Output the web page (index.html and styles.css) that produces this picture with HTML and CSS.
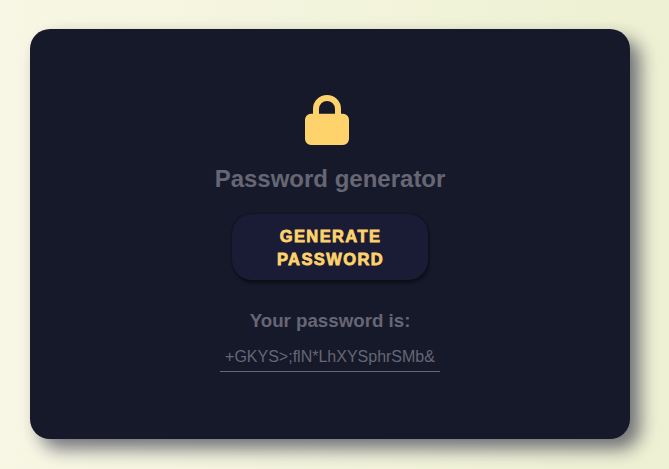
FILE: index.html
```html
<!DOCTYPE html>
<html lang="en">
<head>
<meta charset="utf-8">
<title>Password generator</title>
<link rel="stylesheet" href="styles.css">
</head>
<body>
<main class="card">
  <svg class="lock" viewBox="0 0 50 50" aria-hidden="true">
    <path fill-rule="evenodd" d="M8 18.8V14a14 14 0 0 1 28 0v4.800h2a6 6 0 0 1 6 6V44a6 6 0 0 1-6 6H6a6 6 0 0 1-6-6V24.800a6 6 0 0 1 6-6zM14 18.800h16v-4.800a8 8 0 0 0-16 0z"/>
  </svg>
  <h1 class="title">Password generator</h1>
  <button class="generate" type="button">Generate password</button>
  <h2 class="label">Your password is:</h2>
  <output class="password">+GKYS&gt;;flN*LhXYSphrSMb&amp;</output>
</main>
</body>
</html>
```
FILE: styles.css
```css
* { box-sizing: border-box; }
body {
  margin: 0;
  height: 469px;
  padding: 29px 30px;
  overflow: hidden;
  font-family: "Liberation Sans", Arial, sans-serif;
  background: linear-gradient(to right, #f8f7e5, #eef1d3);
}
.card {
  width: 600px;
  height: 410px;
  padding-top: 66px;
  display: flex;
  flex-direction: column;
  align-items: center;
  border-radius: 20px;
  background: #16192a;
  box-shadow: 10px 10px 18px rgba(26, 26, 53, 0.6);
  color: #666674;
}
.lock { width: 50px; height: 50px; fill: #ffd36c; }
.title { margin: 20px 0 21px; font-size: 24px; line-height: 28px; }
.generate {
  width: 196px;
  height: 66px;
  padding: 11px 39px 9px 40px;
  border: 0;
  border-radius: 20px;
  background: #1a1b35;
  box-shadow: 0 0 2px #0c0c18, 1px 3px 3px rgba(8, 8, 15, 0.6);
  color: #ffd36c;
  font: bold 16.5px/23px "Liberation Sans", Arial, sans-serif;
  letter-spacing: 1.4px;
  text-transform: uppercase;
  -webkit-text-stroke: 0.8px #ffd36c;
}
.label { margin: 30px 0 10px; font-size: 18.72px; line-height: 22px; }
.password {
  width: 220px;
  height: 30px;
  border-bottom: 1px solid #666674;
  font-size: 16px;
  line-height: 29px;
  text-align: center;
}
```
